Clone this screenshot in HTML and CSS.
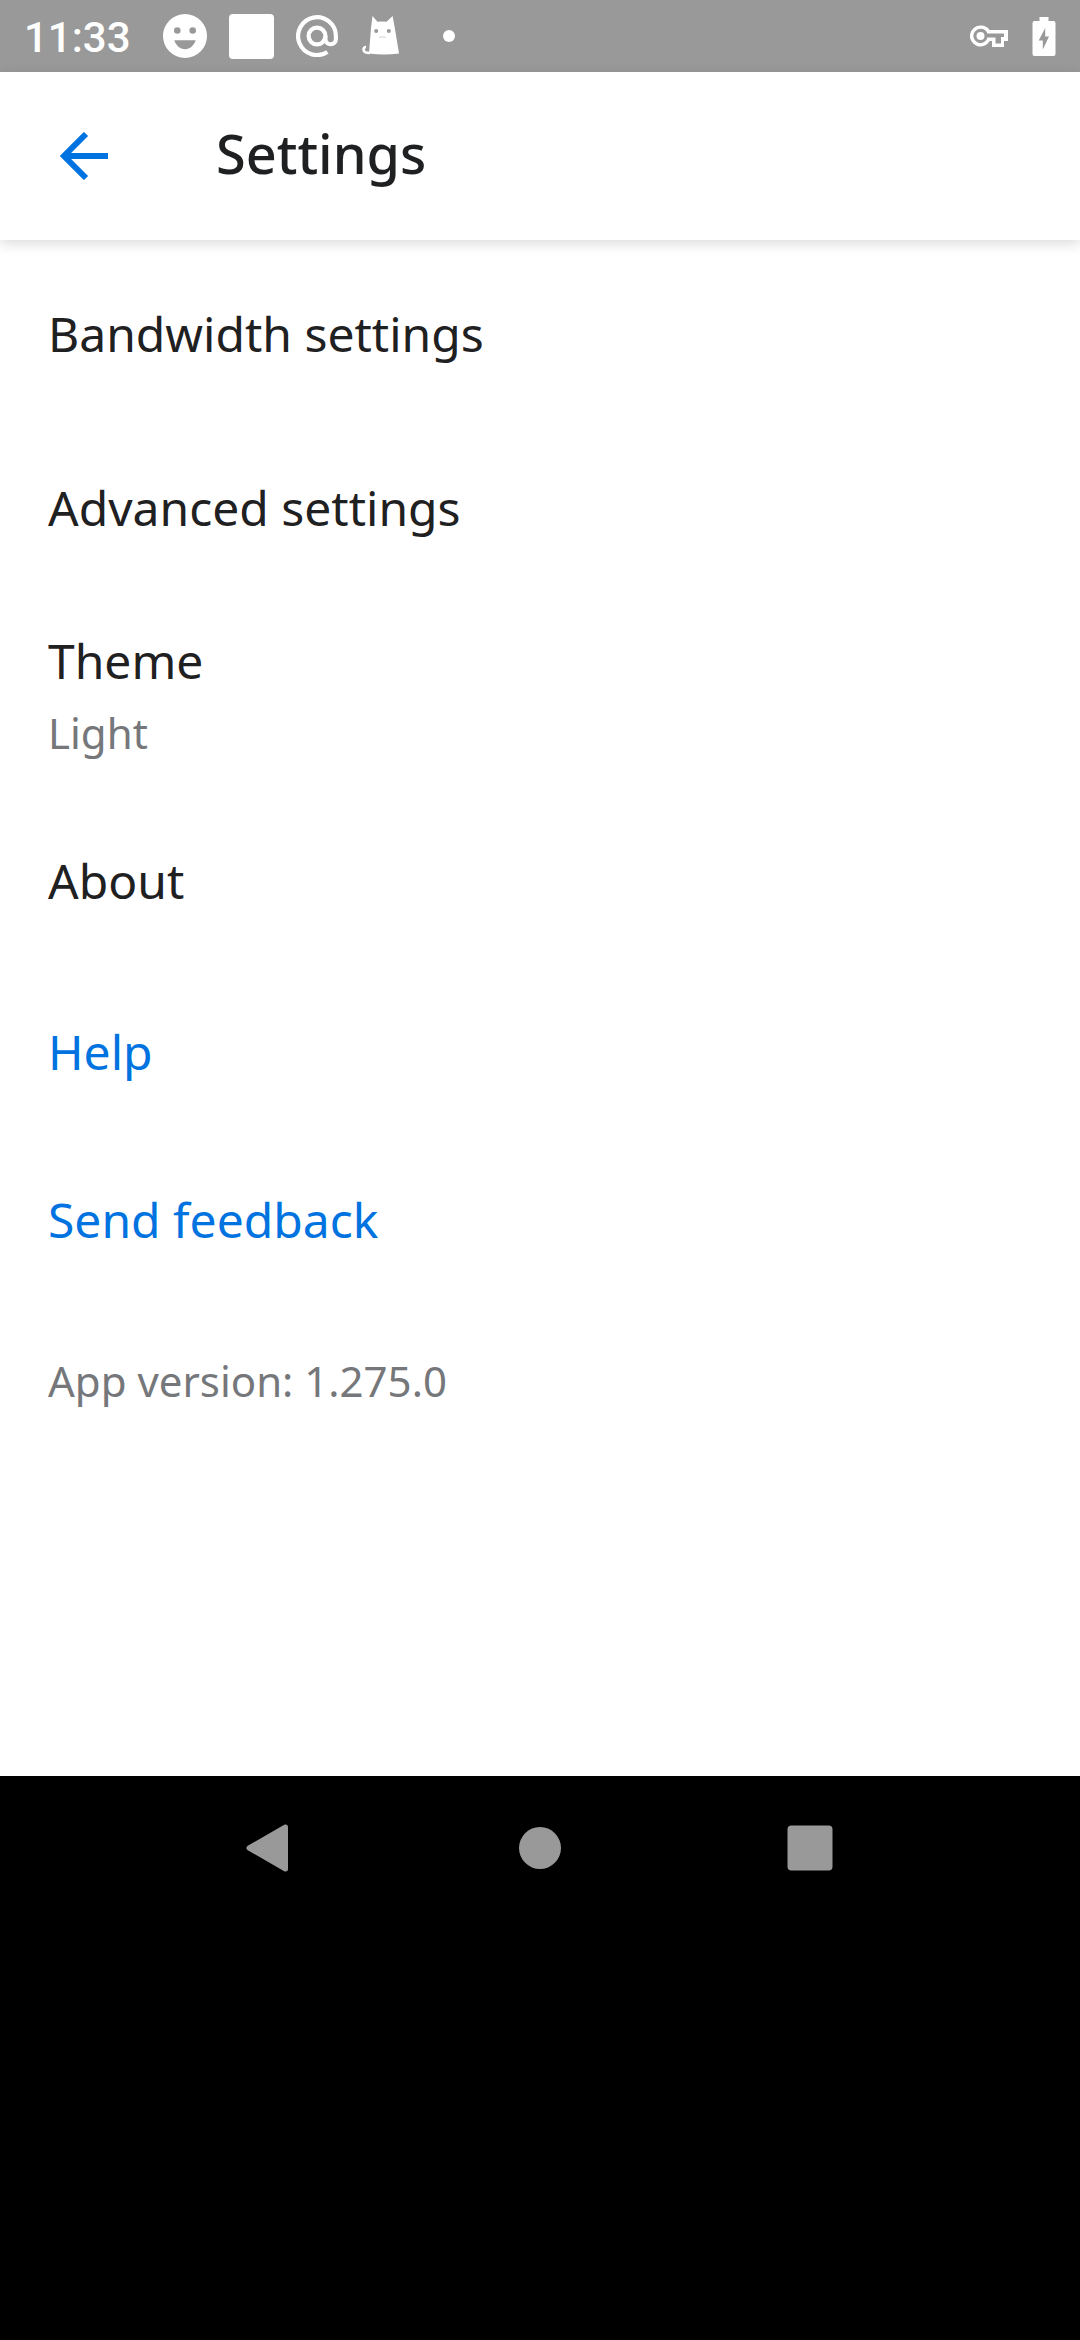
FILE: index.html
```html
<!DOCTYPE html>
<html lang="en">
<head>
<meta charset="utf-8">
<title>Settings</title>
<link rel="stylesheet" href="styles.css">
</head>
<body>
<div class="status">
  <span class="clock">11:33</span>
  <div class="notifications">
    <svg width="44" height="44" viewBox="0 0 44 44"><path fill="#fff" fill-rule="evenodd" d="M22 0a22 22 0 1 0 0 44a22 22 0 1 0 0-44zM14.3 13.2a3.3 3.3 0 1 1 0 6.600a3.300 3.300 0 1 1 0-6.600zM29.700 13.200a3.300 3.300 0 1 1 0 6.600a3.300 3.300 0 1 1 0-6.600zM11.300 26.300H32.700C31.100 31.500 27 35.200 22 35.200S12.900 31.500 11.300 26.300z"/></svg>
    <svg width="45" height="45" viewBox="0 0 45 45"><rect width="45" height="45" rx="4" fill="#fff"/></svg>
    <svg width="42" height="42" viewBox="0 0 42 42" fill="none" stroke="#fff" stroke-width="4.200"><circle cx="21" cy="21" r="8.400"/><path d="M31.400 36.900A18.900 18.900 0 1 1 39.900 21V24a5.200 5.200 0 0 1-10.500 0V21"/></svg>
    <svg class="cat" width="40" height="40" viewBox="0 0 40 40"><path d="M10 37C6.500 37 3.500 36.500 3.500 33.500C3.500 32 4.500 31 6 31.200" fill="none" stroke="#fff" stroke-width="2.600"/><path fill="#fff" d="M12.500 0l5 5.800q4.500-.8 9 0L32.600 0l2.200 12L39 37.500q-15 2-30 0L11 12z"/><circle cx="16.200" cy="15" r="2" fill="#999"/><circle cx="28.800" cy="15" r="2" fill="#999"/><path d="M19.500 21.500q1.500-.9 3-.4q1.500-.5 3 .2" fill="none" stroke="#ccc"/></svg>
    <span class="dot"></span>
  </div>
  <div class="system">
    <svg width="38" height="22" viewBox="0 0 38 22" fill="#fff" fill-rule="evenodd"><path d="M10.500.5A10.500 10.500 0 1 0 19.700 16H22v6H34V16H38V5H19.700A10.500 10.500 0 0 0 10.500.500zM10.500 3.800C14 3.800 16.500 5.800 17.400 8.500H34V12H31V18.500H25.500V12.500H17.400A7.100 7.100 0 1 1 10.500 3.800zM10.500 7a4 4 0 1 0 0 8a4 4 0 1 0 0-8z"/></svg>
    <svg width="24" height="39" viewBox="0 0 24 39"><path fill="#fff" fill-rule="evenodd" d="M7.500 0H16.500V4H21.500Q23.500 4 23.500 6V37Q23.500 39 21.500 39H2.500Q.500 39 .500 37V6Q.500 4 2.500 4H7.500zM13.200 11L6.700 23.500H10.800V32.500L17 19.500H13.200z"/></svg>
  </div>
</div>
<header class="appbar">
  <svg class="back" width="48" height="48" viewBox="0 0 48 48"><path d="M48 24H4M26 2L4 24L26 46" fill="none" stroke="#0073e0" stroke-width="6"/></svg>
  <h1 class="title">Settings</h1>
</header>
<main class="list">
  <div class="row">Bandwidth settings</div>
  <div class="row">Advanced settings</div>
  <div class="row theme"><span>Theme</span><span class="secondary">Light</span></div>
  <div class="row about">About</div>
  <a class="row link help">Help</a>
  <a class="row link feedback">Send feedback</a>
  <div class="row secondary version">App version: 1.275.0</div>
</main>
<nav class="navbar">
  <svg width="48" height="48" viewBox="0 0 48 48"><path d="M3 24L39.500 3V45z" fill="#999" stroke="#999" stroke-width="5" stroke-linejoin="round"/></svg>
  <svg width="48" height="48" viewBox="0 0 48 48"><circle cx="24" cy="24" r="21" fill="#999"/></svg>
  <svg width="48" height="48" viewBox="0 0 48 48"><rect x="1.500" y="1.500" width="45" height="45" rx="4" fill="#999"/></svg>
</nav>
</body>
</html>
```
FILE: styles.css
```css
* {
  box-sizing: border-box;
}

body {
  margin: 0;
  width: 1080px;
  height: 2340px;
  display: flex;
  flex-direction: column;
  background: #000;
  color: #1f2021;
  font-family: "Noto Sans", sans-serif;
}

svg {
  display: block;
  flex: none;
}

.status {
  height: 72px;
  padding: 0 24px;
  display: flex;
  align-items: center;
  background: #999;
  color: #fff;
}

.clock {
  width: 139px;
  font: 500 42px/49px Roboto, sans-serif;
  padding-top: 2px;
}

.notifications {
  display: flex;
  align-items: center;
  gap: 22px;
}

.cat {
  margin-top: -1px;
}

.dot {
  width: 12px;
  height: 12px;
  margin-left: 21px;
  border-radius: 50%;
  background: #fff;
}

.system {
  margin-left: auto;
  display: flex;
  align-items: center;
  gap: 24px;
}

.appbar {
  height: 168px;
  padding-left: 60px;
  display: flex;
  align-items: center;
  gap: 108px;
  background: #fff;
  box-shadow: 0 4px 12px rgba(0, 0, 0, 0.14);
  z-index: 1;
}

.title {
  margin: 0;
  font-size: 54px;
  line-height: 72px;
  font-weight: 500;
  padding-bottom: 6px;
}

.list {
  height: 1536px;
  padding-top: 7px;
  display: flex;
  flex-direction: column;
  background: #fff;
}

.row {
  height: 174px;
  padding: 0 48px;
  display: flex;
  flex-direction: column;
  justify-content: center;
  font-size: 48px;
  line-height: 72px;
}

.theme {
  height: 204px;
}

.about {
  height: 164px;
}

.link {
  color: #0073e0;
}

.help {
  height: 177px;
}

.feedback {
  height: 159px;
}

.version {
  height: 164px;
}

.secondary {
  font-size: 42px;
  color: #75777b;
}

.navbar {
  height: 144px;
  padding: 0 246px;
  display: flex;
  align-items: center;
  justify-content: space-between;
}
```
